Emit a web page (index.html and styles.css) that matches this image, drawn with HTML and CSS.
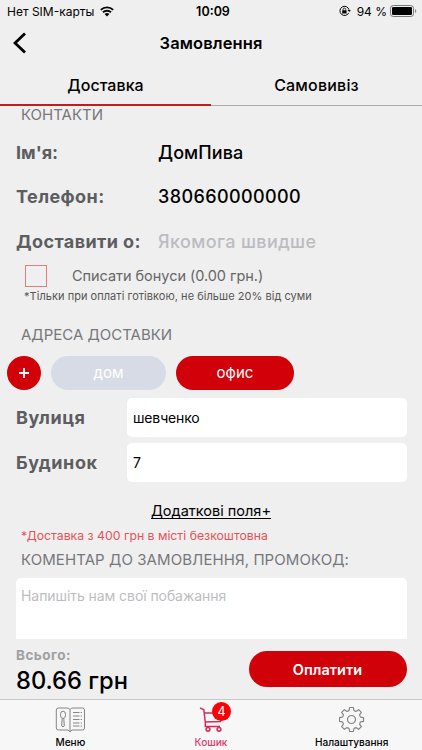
FILE: index.html
```html
<!DOCTYPE html>
<html lang="uk">
<head>
<meta charset="utf-8">
<title>Замовлення</title>
<link rel="stylesheet" href="styles.css">
</head>
<body>
<div class="app">
  <div class="status">
    <div class="status-left"><span class="carrier">Нет SIM-карты</span>
      <svg class="wifi" viewBox="0 0 14 11" width="14" height="11"><path d="M.8 3.9a9 9 0 0 1 12.400 0M3 6.300a5.800 5.800 0 0 1 8 0" fill="none" stroke="#000" stroke-width="1.900"/><path d="M4.600 8.100a3.500 3.500 0 0 1 4.800 0L7 10.600z"/></svg>
    </div>
    <div class="clock">10:09</div>
    <div class="status-right">
      <svg viewBox="0 0 12 12" width="12" height="12"><path d="M9.700 7.900A4.600 4.600 0 1 1 10 4.700" fill="none" stroke="#000"/><path d="M8.500 5.100h3.300L10.200 7z"/><rect x="3.200" y="5.300" width="4.400" height="3.300" rx=".4"/><path d="M4.100 5.500V4.400a1.300 1.300 0 0 1 2.600 0v1.100" fill="none" stroke="#000" stroke-width=".8"/></svg>
      <span class="percent">94 %</span>
      <svg class="battery" viewBox="0 0 27 12" width="27" height="12"><rect x=".5" y=".5" width="23" height="11" rx="2.800" fill="none" stroke="#777"/><rect x="2" y="2" width="20" height="8" rx="1.300"/><path d="M25 4v4q1.300-.7 1.300-2T25 4z" fill="#888"/></svg>
    </div>
  </div>
  <header class="header">
    <svg class="back" viewBox="0 0 14 22" width="14" height="22"><path d="M12 1.500 2 11l10 9.500" fill="none" stroke="#000" stroke-width="2.800"/></svg>
    <h1 class="title">Замовлення</h1>
  </header>
  <nav class="tabs"><div class="tab tab-active"><span class="t-delivery">Доставка</span></div><div class="tab"><span class="t-pickup">Самовивіз</span></div></nav>
  <main class="content">
    <h2 class="section s-contacts"><span>КОНТАКТИ</span></h2>
    <div class="row"><span class="label l-name">Ім'я:</span><span class="value v-name">ДомПива</span></div>
    <div class="row"><span class="label l-phone">Телефон:</span><span class="value v-phone">380660000000</span></div>
    <div class="row"><span class="label l-time">Доставити о:</span><span class="value v-time">Якомога швидше</span></div>
    <div class="bonus"><i class="checkbox"></i><span class="bonus-text">Списати бонуси (0.00 грн.)</span></div>
    <p class="hint"><span>*Тільки при оплаті готівкою, не більше 20% від суми</span></p>
    <h2 class="section s-address"><span>АДРЕСА ДОСТАВКИ</span></h2>
    <div class="chips">
      <div class="add"><svg viewBox="0 0 10 10" width="10" height="10"><path d="M5 0v10M0 5h10" stroke="#fff" stroke-width="1.800"/></svg></div>
      <div class="chip chip-home"><span>дом</span></div>
      <div class="chip chip-office"><span>офис</span></div>
    </div>
    <div class="field"><span class="label l-street">Вулиця</span><div class="input"><span class="i-street">шевченко</span></div></div>
    <div class="field"><span class="label l-house">Будинок</span><div class="input"><span>7</span></div></div>
    <div class="more"><span>Додаткові поля+</span></div>
    <p class="notice"><span>*Доставка з 400 грн в місті безкоштовна</span></p>
    <h2 class="section s-comment"><span>КОМЕНТАР ДО ЗАМОВЛЕННЯ, ПРОМОКОД:</span></h2>
    <div class="comment"><span>Напишіть нам свої побажання</span></div>
  </main>
  <div class="summary">
    <div class="total"><span class="total-label">Всього:</span><span class="total-value">80.66 грн</span></div>
    <div class="pay"><span>Оплатити</span></div>
  </div>
  <footer class="tabbar">
    <div class="item">
      <svg viewBox="-.5 0 30 26" width="30" height="26" fill="none" stroke="#858585"><path d="M14.500 2.500Q13.500 1 11.500 1H3Q.8 1 .8 3v18q0 2 2.200 2h9.500l2 1.800L16.500 23H27q2 0 2-2V3q0-2-2-2h-9.500q-2 0-3 1.500V24"/><ellipse cx="7.500" cy="7.800" rx="2.600" ry="3.700"/><path d="M6.700 11.500 6.200 19q1.300 1.700 2.600 0l-.5-7.500M17.500 5.500H24M17.500 9H24M17.500 12.500H24M17.500 16H24M17.500 19H24M25.200 5.500h1.300M25.200 9h1.300M25.200 12.500h1.300M25.200 16h1.300M25.200 19h1.300"/></svg>
      <span>Меню</span>
    </div>
    <div class="item item-active">
      <div class="cart"><svg viewBox="0 0 26 26" width="26" height="26" fill="none" stroke="#d42b59" stroke-width="1.500"><path d="M2 .9 5.800 2.700 7.300 14.800V19.500H22M6.500 6H24.500L22.500 14.500 7.300 15"/><circle cx="10" cy="22.300" r="1.900"/><circle cx="21" cy="22.300" r="1.900"/></svg><b class="badge">4</b></div>
      <span>Кошик</span>
    </div>
    <div class="item">
      <svg viewBox="-12.500 -12.500 26 26" width="26" height="26" fill="none" stroke="#858585" stroke-width="1.200" stroke-linejoin="round"><defs><path id="tooth" d="M-3.440-8.310-2.400-9.200-1.900-12H1.900L2.400-9.200 3.440-8.310"/></defs><use href="#tooth"/><use href="#tooth" transform="rotate(45)"/><use href="#tooth" transform="rotate(90)"/><use href="#tooth" transform="rotate(135)"/><use href="#tooth" transform="rotate(180)"/><use href="#tooth" transform="rotate(225)"/><use href="#tooth" transform="rotate(270)"/><use href="#tooth" transform="rotate(315)"/><circle r="4"/></svg>
      <span>Налаштування</span>
    </div>
  </footer>
</div>
</body>
</html>
```
FILE: styles.css
```css
* { box-sizing: border-box; }
body { margin: 0; font-family: Inter, "Liberation Sans", sans-serif; color: #000; }
h1, h2, p { margin: 0; font-weight: 400; }
svg { display: block; flex: none; }
span { white-space: nowrap; }
.app { width: 422px; height: 750px; background: #efefef; display: flex; flex-direction: column; overflow: hidden; }
.status { height: 21px; display: grid; grid-template-columns: 1fr auto 1fr; align-items: center; padding: 1px 5px 0 7px; font-size: 12px; }
.status-left, .status-right { display: flex; align-items: center; }
.status-left { gap: 6px; }
.status-right { justify-content: flex-end; }
.percent { margin: 0 3px 0 6px; }
.clock { font-weight: 600; font-size: 12.500px; padding-left: 2px; }
.header { height: 43px; display: grid; grid-template-columns: 100px 1fr 100px; align-items: center; }
.back { margin-left: 13px; }
.title { text-align: center; font-size: 16.500px; font-weight: 600; letter-spacing: .1px; }
.tabs { height: 42px; display: flex; flex: none; }
.tab { flex: 1; display: flex; align-items: center; justify-content: center; font-size: 16px; font-weight: 500; border-bottom: 1px solid #aaa; letter-spacing: .2px; }
.tab-active { border-bottom: 2px solid #c61a1f; padding-top: 1px; letter-spacing: .05px; }
.content { height: 533px; flex: none; overflow: hidden; }
.section { display: flex; align-items: center; padding-left: 21px; font-size: 15px; color: #77777b; }
.s-contacts { height: 24px; padding-bottom: 8px; }
.row { height: 44.600px; display: grid; grid-template-columns: 142px 1fr; align-items: center; padding-left: 16px; }
.label { font-size: 18px; font-weight: 700; color: #5d5d5f; }
.l-phone, .l-time { letter-spacing: .4px; }
.value { font-size: 18px; font-weight: 500; }
.v-name { letter-spacing: .1px; }
.v-phone { letter-spacing: .4px; }
.v-time { color: #bcbcc0; letter-spacing: .37px; }
.l-street, .l-house { letter-spacing: .55px; }
.bonus { height: 24px; display: flex; align-items: center; padding-left: 25px; gap: 25px; font-size: 14.500px; letter-spacing: -.04px; color: #666; }
.checkbox { width: 22px; height: 22px; border: 1px solid #e67c7c; }
.hint { height: 17px; display: flex; align-items: center; padding-left: 24px; font-size: 11px; letter-spacing: .04px; color: #555; }
.s-address { height: 60px; }
.chips { display: flex; gap: 10px; margin: -9px 0 0 7px; height: 34px; }
.add { width: 34px; border-radius: 50%; background: #d00109; display: grid; place-items: center; }
.chip { border-radius: 17px; color: #fff; display: grid; place-items: center; font-size: 15px; }
.chip-home { width: 115px; background: #d7dbe6; }
.chip-office { width: 118px; background: #d00109; }
.chips + .field { margin-top: 8px; }
.field { height: 39px; margin: 0 15.500px 6px 16px; display: grid; grid-template-columns: 111px 1fr; align-items: center; }
.input { height: 39px; border-radius: 5px; background: #fff; display: flex; align-items: center; padding-left: 6px; font-size: 14px; letter-spacing: -.15px; }
.more { height: 42px; display: flex; align-items: center; justify-content: center; padding-top: 4px; font-size: 14.500px; text-decoration: underline; text-underline-offset: 2px; margin-bottom: -6px; }
.notice { height: 24px; display: flex; align-items: center; padding-left: 21px; font-size: 12.250px; color: #e45456; }
.s-comment { height: 24px; letter-spacing: .08px; }
.comment { height: 62px; margin: 6px 15.500px 0; background: #fff; border-radius: 5px 5px 0 0; padding: 9px 5.500px; font-size: 14px; letter-spacing: -.07px; color: #bdbdc0; }
.summary { height: 60px; flex: none; display: flex; justify-content: space-between; padding: 0 15.500px 0 16px; }
.total { display: flex; flex-direction: column; padding-top: 8px; }
.total-label { font-size: 13.500px; line-height: 16px; font-weight: 700; letter-spacing: .45px; color: #a0a0a3; }
.total-value { font-size: 23.700px; line-height: 36px; font-weight: 500; }
.pay { width: 158px; height: 36px; margin-top: 12px; border-radius: 18px; background: #d00109; color: #fff; display: grid; place-items: center; font-size: 14.500px; font-weight: 600; }
.tabbar { height: 51px; flex: none; border-top: 1px solid #c8c8c8; background: #f7f7f7; display: grid; grid-template-columns: repeat(3, 1fr); font-size: 10.100px; }
.item { display: flex; flex-direction: column; align-items: center; padding-top: 7px; }
.item > span { line-height: 14px; margin-top: 2px; font-weight: 500; }
.item-active { color: #e0386a; }
.cart { position: relative; }
.badge { position: absolute; left: 14px; top: -5px; width: 19px; height: 19px; border-radius: 50%; background: #fb0007; color: #fff; font-size: 12.500px; line-height: 19px; font-weight: 400; text-align: center; }
```
